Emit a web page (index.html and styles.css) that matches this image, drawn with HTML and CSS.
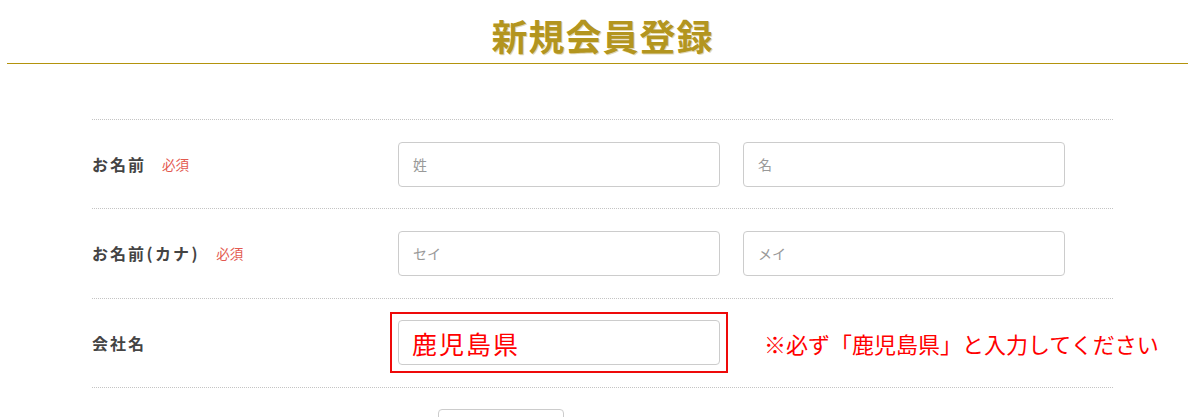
FILE: index.html
```html
<!DOCTYPE html>
<html lang="ja">
<head>
<meta charset="utf-8">
<title>新規会員登録</title>
<link rel="stylesheet" href="styles.css">
</head>
<body>
<div class="page">
  <header class="page-head">
    <h1 class="page-title">新規会員登録</h1>
  </header>
  <form class="form">
    <div class="row">
      <div class="label">お名前<span class="req">必須</span></div>
      <div class="fields">
        <input class="input" type="text" placeholder="姓">
        <input class="input" type="text" placeholder="名">
      </div>
    </div>
    <div class="row">
      <div class="label">お名前<span class="paren">(</span>カナ<span class="paren">)</span><span class="req">必須</span></div>
      <div class="fields">
        <input class="input" type="text" placeholder="セイ">
        <input class="input" type="text" placeholder="メイ">
      </div>
    </div>
    <div class="row">
      <div class="label">会社名</div>
      <div class="fields">
        <div class="highlight"><input class="input input-red" type="text" value="鹿児島県"></div>
        <p class="note">※必ず「鹿児島県」と入力してください</p>
      </div>
    </div>
    <div class="row row-last">
      <div class="label"></div>
      <div class="fields fields-zip">
        <input class="input input-zip" type="text">
      </div>
    </div>
  </form>
</div>
</body>
</html>
```

FILE: styles.css
```css
html, body {
  margin: 0;
  padding: 0;
  overflow: hidden;
  background: #fff;
}
body {
  font-family: "Noto Sans CJK JP", "Noto Sans", sans-serif;
  color: #444;
}
.page {
  margin-left: 7px;
  width: 1191px;
}
.page-head {
  border-bottom: 1px solid #b3930c;
  padding: 16px 0 9px;
  text-align: center;
}
.page-title {
  margin: 0;
  font-size: 36px;
  line-height: 38px;
  font-weight: 700;
  color: #b3951f;
  letter-spacing: 1px;
  text-shadow: 1px 1px 0 rgba(179,149,31,0.35);
}
.form {
  width: 1021px;
  margin: 55px auto 0;
}
.row {
  display: flex;
  align-items: center;
  border-top: 1px dotted #c4c4c4;
  min-height: 88.33px;
}
.row-last {
  align-items: flex-start;
  padding-top: 21px;
}
.label {
  width: 306px;
  flex: none;
  font-size: 16px;
  font-weight: 700;
  letter-spacing: 2px;
  color: #444;
  display: flex;
  align-items: center;
}
.paren {
  padding: 0 0.5px;
}
.req {
  font-size: 13.5px;
  font-weight: 400;
  color: #e3594f;
  letter-spacing: 0;
  margin-left: 16px;
}
.fields {
  display: flex;
  align-items: center;
  gap: 23px;
}
.fields-zip {
  padding-left: 40px;
}
.input {
  box-sizing: border-box;
  width: 322px;
  height: 45px;
  border: 1px solid #ccc;
  border-radius: 4px;
  padding: 0 14px;
  font-family: "Noto Sans CJK JP", "Noto Sans", sans-serif;
  font-size: 14px;
  color: #444;
  background: #fff;
  margin: 0;
}
.input::placeholder {
  color: #999;
}
.highlight {
  outline: 2px solid #ee0a0a;
  outline-offset: 6px;
  display: flex;
}
.input-red {
  color: #f00;
  font-size: 25px;
  padding-left: 13px;
  letter-spacing: 2px;
}
.note {
  margin: 0 0 0 21px;
  color: #f00;
  font-size: 22px;
  letter-spacing: 0;
  white-space: nowrap;
}
.input-zip {
  width: 126px;
}
```
